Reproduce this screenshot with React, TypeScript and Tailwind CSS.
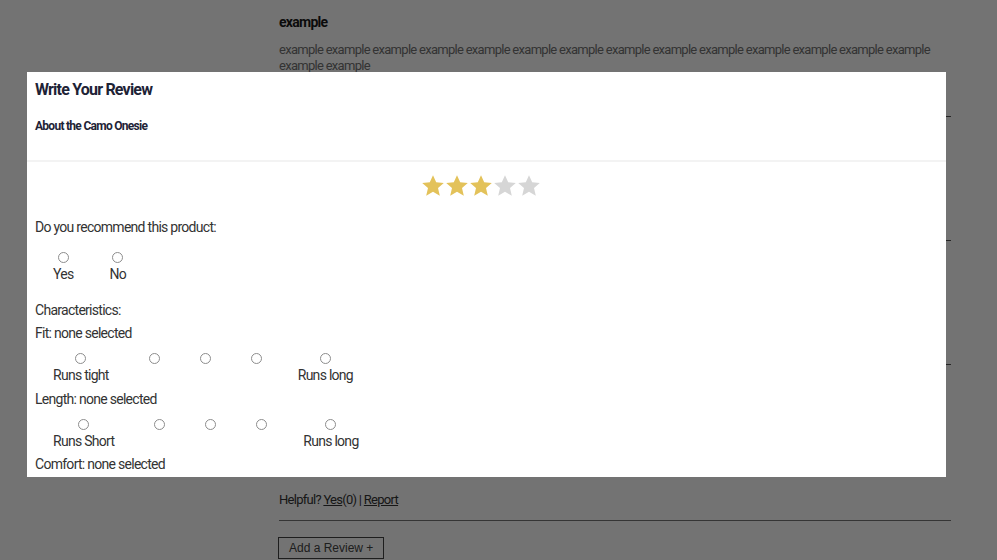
import React from "react";

const font = { fontFamily: "Roboto, 'Liberation Sans', sans-serif" };

const Star = ({ filled }: { filled: boolean }) => (
  <svg width="24" height="24" viewBox="0 0 24 24">
    <path
      d="M12 1.2l3.2 7.1 7.6.7-5.8 5.1 1.8 7.6L12 17.8l-6.8 3.9 1.8-7.6L1.2 9l7.6-.7z"
      fill={filled ? "#e3c25a" : "#d6d6d6"}
    />
  </svg>
);

const Radio = () => (
  <input
    type="radio"
    className="appearance-none w-[11px] h-[11px] rounded-full border border-[#8d8d8d] bg-white m-0"
  />
);

const Scale = ({ low, high }: { low: string; high: string }) => (
  <div className="flex mt-[11px] -ml-[2px]">
    {[low, "", "", "", high].map((label, i) => (
      <label
        key={i}
        className={`flex flex-col items-center ${i === 4 ? "pl-[16px] pr-[20px]" : "px-[20px]"}`}
      >
        <Radio />
        <span className="mt-[2px] h-[18px] leading-[18px]">{label}</span>
      </label>
    ))}
  </div>
);

export default function App() {
  return (
    <div className="relative w-[997px] h-[560px] overflow-hidden bg-white tracking-[-0.045em]" style={font}>
      {/* page behind the modal */}
      <div className="ml-[279px] w-[672px]">
        <div className="pt-[13px] text-[14px] leading-[18px] font-bold text-[#1a1a1a]">example</div>
        <p className="mt-[11px] text-[13px] leading-[16px] text-[#727272] tracking-[-0.055em]">
          example example example example example example example example example example example example example
          example example example
        </p>
        <div className="mt-[42px] border-b border-[#555]" />
        <div className="h-[124px] border-b border-[#555]" />
        <div className="h-[124px] border-b border-[#555]" />
        <div className="mt-[127px] text-[13px] leading-[16px] text-[#333]">
          Helpful? <span className="underline">Yes</span>(0) | <span className="underline">Report</span>
        </div>
        <div className="mt-[12px] border-b border-[#777]" />
        <button
          className="mt-[16px] -ml-[1px] h-[22px] px-[10px] border border-[#444] text-[12px] text-[#444] tracking-normal"
          style={{ fontFamily: "'Liberation Sans', Arial, sans-serif" }}
        >
          Add a Review +
        </button>
      </div>

      {/* overlay */}
      <div className="absolute inset-0 bg-black/[0.55]" />

      {/* modal */}
      <div className="absolute left-[27px] top-[72px] w-[919px] h-[405px] bg-white overflow-hidden text-[14px] text-[#333]">
        <div className="h-[90px] px-[8px] pt-[8px] border-b-2 border-[#f3f3f3]">
          <h2 className="text-[16px] leading-[20px] font-bold text-[#1e2336] tracking-[-0.05em]">Write Your Review</h2>
          <p className="mt-[18px] text-[12px] leading-[16px] font-bold text-[#1e2336] tracking-[-0.06em]">
            About the Camo Onesie
          </p>
        </div>

        <div className="px-[8px]">
          <div className="flex justify-center pr-[11px] mt-[12px]">
            {[1, 2, 3, 4, 5].map((n) => (
              <Star key={n} filled={n <= 3} />
            ))}
          </div>

          <div className="mt-[20px] leading-[18px]">Do you recommend this product:</div>
          <div className="flex mt-[16px]">
            {["Yes", "No"].map((label) => (
              <label key={label} className="flex flex-col items-center px-[18px]">
                <Radio />
                <span className="mt-[2px] leading-[18px]">{label}</span>
              </label>
            ))}
          </div>

          <div className="mt-[18px] leading-[18px]">Characteristics:</div>
          <div className="mt-[5px] leading-[18px]">Fit: none selected</div>
          <Scale low="Runs tight" high="Runs long" />
          <div className="mt-[6px] leading-[18px]">Length: none selected</div>
          <Scale low="Runs Short" high="Runs long" />
          <div className="mt-[5px] leading-[18px]">Comfort: none selected</div>
        </div>
      </div>
    </div>
  );
}
